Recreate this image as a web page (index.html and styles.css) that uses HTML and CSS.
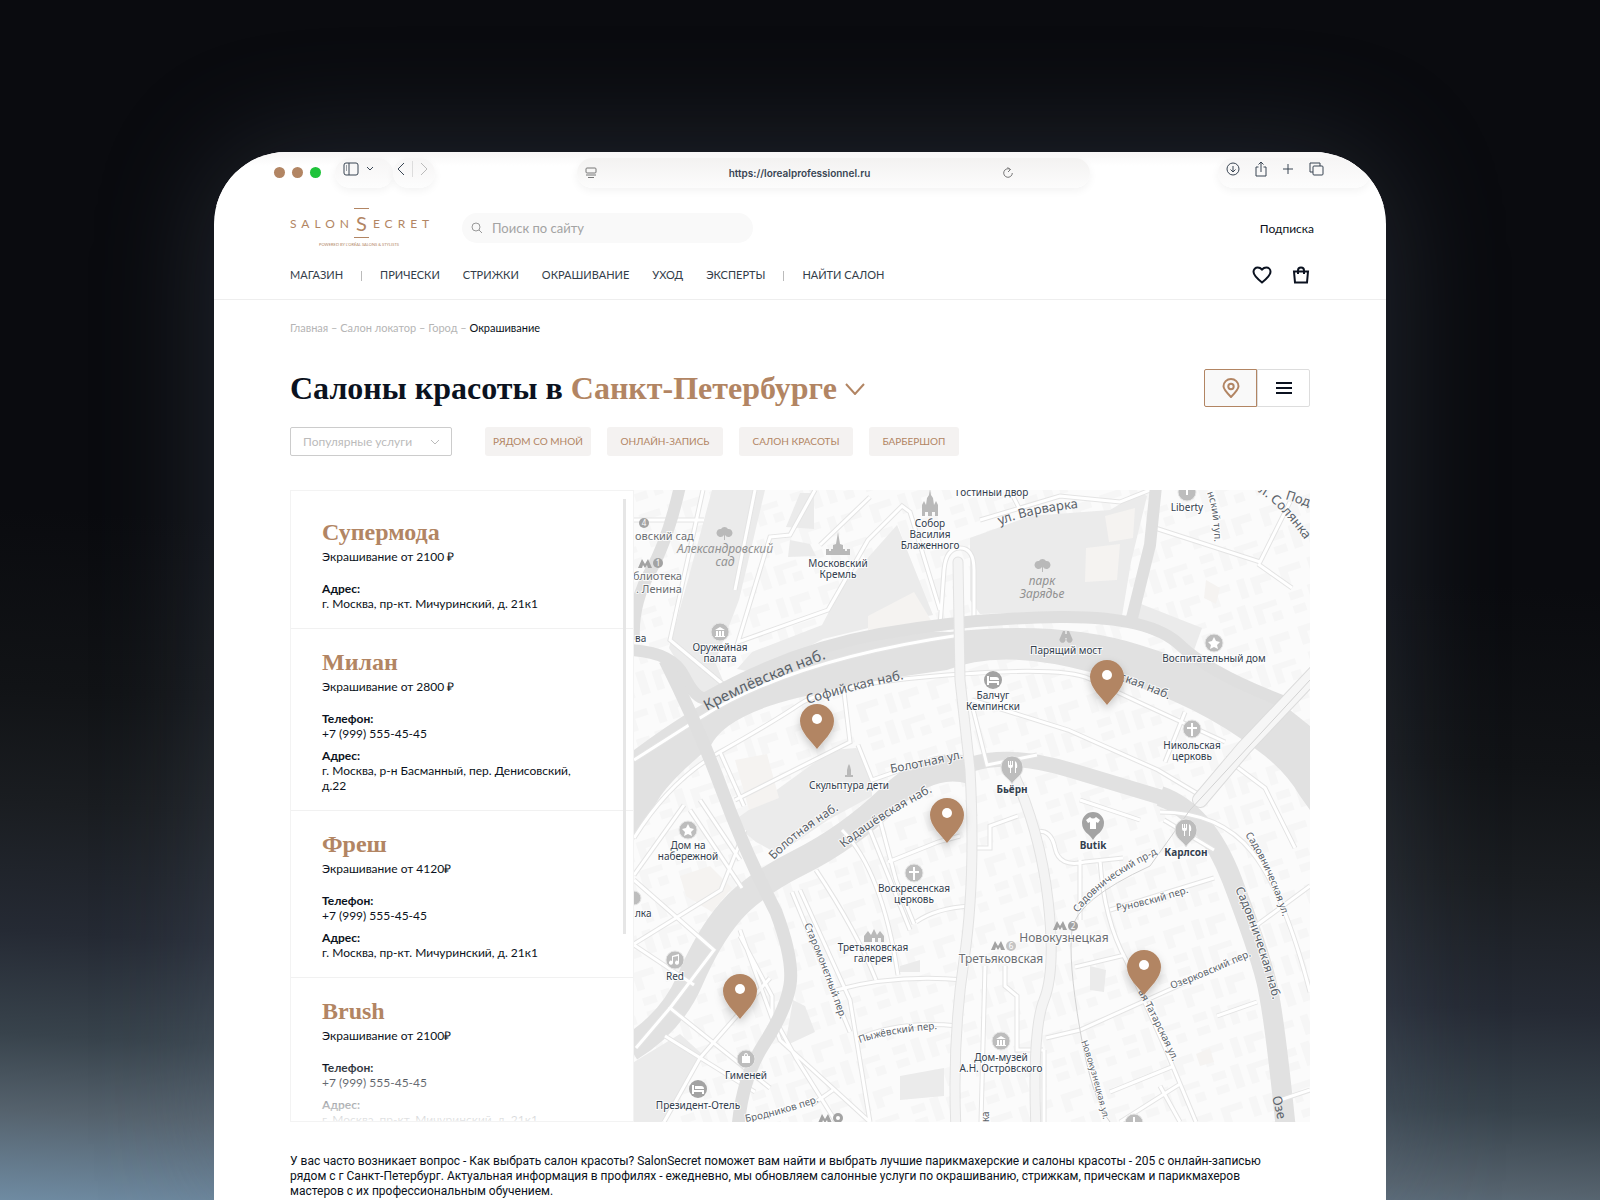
FILE: index.html
```
<!DOCTYPE html>
<html lang="ru">
<head>
    <meta charset="UTF-8">
    <title>Салоны красоты в Санкт-Петербурге</title>
    <meta name="viewport" content="width=device-width, initial-scale=1.0">
    <link rel="stylesheet" href="styles.css">
</head>
<body>
    <div class="window">
        <div class="browser-bar">
            <div class="dots"><span></span><span></span><span class="green"></span></div>
            <div class="bar-group sidebar-group">
                <button type="button" aria-label="Боковая панель">
                    <svg width="16" height="14" viewBox="0 0 16 14"><rect x="1" y="1" width="14" height="12" rx="2"/><path d="M6 1v12M3 4h1M3 6h1M3 8h1"/></svg>
                </button>
                <button type="button" aria-label="Вкладки">
                    <svg width="8" height="14" viewBox="0 0 8 14"><path d="M1 5l3 3 3-3"/></svg>
                </button>
            </div>
            <div class="bar-group history-group">
                <button type="button" aria-label="Назад">
                    <svg width="8" height="14" viewBox="0 0 8 14"><path d="M7 1L1 7l6 6"/></svg>
                </button>
                <i></i>
                <button type="button" class="muted" aria-label="Вперёд">
                    <svg width="8" height="14" viewBox="0 0 8 14"><path d="M1 1l6 6-6 6"/></svg>
                </button>
            </div>
            <div class="address">
                <svg width="12" height="12" viewBox="0 0 12 12"><rect x="1" y="1" width="10" height="5" rx="1"/><path d="M1 8h10M3 10.500h6"/></svg>
                <span>https://lorealprofessionnel.ru</span>
                <svg width="12" height="12" viewBox="0 0 12 12"><path d="M8.500 2.500A4.300 4.300 0 1 0 10.300 6M5.500 0.500l3 2-2.500 2.500"/></svg>
            </div>
            <div class="bar-group tools-group">
                <button type="button" aria-label="Загрузки">
                    <svg width="14" height="16" viewBox="0 0 14 16"><circle cx="7" cy="8" r="6"/><path d="M7 5v6M4.500 8.500L7 11l2.500-2.500"/></svg>
                </button>
                <button type="button" aria-label="Поделиться">
                    <svg width="14" height="16" viewBox="0 0 14 16"><path d="M4.500 6H2v9h10V6H9.500M7 11V1M4.500 3.500L7 1l2.500 2.500"/></svg>
                </button>
                <button type="button" aria-label="Новая вкладка">
                    <svg width="12" height="16" viewBox="0 0 12 16"><path d="M6 3v10M1 8h10"/></svg>
                </button>
                <button type="button" aria-label="Все вкладки">
                    <svg width="16" height="16" viewBox="0 0 16 16"><rect x="5" y="5" width="10" height="9" rx="1"/><path d="M5 11H2V2h10v3"/></svg>
                </button>
            </div>
        </div>

        <header>
            <div class="header-top">
                <a href="#" class="logo" aria-label="SalonSecret">
                    <span class="logo-name"><span>SALON</span><b>S</b><span>ECRET</span></span>
                    <small>POWERED BY L'ORÉAL SALONS &amp; STYLISTS</small>
                </a>
                <label class="search">
                    <svg width="12" height="12" viewBox="0 0 12 12"><circle cx="5" cy="5" r="4"/><path d="M8 8l3 3"/></svg>
                    <input type="search" placeholder="Поиск по сайту" aria-label="Поиск по сайту">
                </label>
                <a href="#" class="subscribe">Подписка</a>
            </div>
            <nav>
                <a href="#">МАГАЗИН</a>
                <i></i>
                <a href="#">ПРИЧЕСКИ</a>
                <a href="#">СТРИЖКИ</a>
                <a href="#">ОКРАШИВАНИЕ</a>
                <a href="#">УХОД</a>
                <a href="#">ЭКСПЕРТЫ</a>
                <i></i>
                <a href="#">НАЙТИ САЛОН</a>
                <div class="nav-icons">
                    <a href="#" aria-label="Избранное">
                        <svg width="20" height="18" viewBox="0 0 20 18"><path d="M10 16.500C5 12.500 1.500 9.500 1.500 5.800 1.500 3.200 3.400 1.500 5.700 1.500c1.800 0 3.400 1 4.300 2 .9-1 2.500-2 4.300-2 2.300 0 4.200 1.700 4.200 4.300 0 3.700-3.500 6.700-8.500 10.700z"/></svg>
                    </a>
                    <a href="#" aria-label="Корзина">
                        <svg width="18" height="18" viewBox="0 0 18 18"><path d="M2 5.500h14L15 16.500H3z"/><path d="M6 8V4.500a3 3 0 0 1 6 0V8"/></svg>
                    </a>
                </div>
            </nav>
        </header>

        <main>
            <div class="breadcrumbs">
                <a href="#">Главная</a> – <a href="#">Салон локатор</a> – <a href="#">Город</a> – <b>Окрашивание</b>
            </div>

            <div class="title-row">
                <h1>Салоны красоты в <button type="button">Санкт-Петербурге
                    <svg width="20" height="12" viewBox="0 0 20 12"><path d="M1 1l9 10 9-10"/></svg></button></h1>
                <div class="view-switch">
                    <button type="button" class="active" aria-label="Карта">
                        <svg width="18" height="20" viewBox="0 0 18 20"><path d="M9 19C4.500 14.500 1.500 11.500 1.500 8.300a7.500 7.300 0 0 1 15 0C16.500 11.500 13.500 14.500 9 19z"/><circle cx="9" cy="8.500" r="2.700"/></svg>
                    </button>
                    <button type="button" aria-label="Список">
                        <svg width="16" height="12" viewBox="0 0 16 12"><path d="M0 1h16M0 6h16M0 11h16"/></svg>
                    </button>
                </div>
            </div>

            <div class="filters">
                <div class="select-wrap">
                    <select aria-label="Популярные услуги">
                        <option>Популярные услуги</option>
                    </select>
                    <svg width="10" height="6" viewBox="0 0 10 6"><path d="M1 1l4 4 4-4"/></svg>
                </div>
                <button type="button" class="chip chip-near">РЯДОМ СО МНОЙ</button>
                <button type="button" class="chip chip-online">ОНЛАЙН-ЗАПИСЬ</button>
                <button type="button" class="chip chip-salon">САЛОН КРАСОТЫ</button>
                <button type="button" class="chip chip-barber">БАРБЕРШОП</button>
            </div>

            <section class="locator">
                <div class="salons">
                    <article>
                        <h2>Супермода</h2>
                        <p>Экрашивание от 2100 ₽</p>
                        <dl>
                            <dt>Адрес:</dt>
                            <dd>г. Москва, пр-кт. Мичуринский, д. 21к1</dd>
                        </dl>
                    </article>
                    <article>
                        <h2>Милан</h2>
                        <p>Экрашивание от 2800 ₽</p>
                        <dl>
                            <dt>Телефон:</dt>
                            <dd>+7 (999) 555-45-45</dd>
                            <dt>Адрес:</dt>
                            <dd>г. Москва, р-н Басманный, пер. Денисовский, д.22</dd>
                        </dl>
                    </article>
                    <article>
                        <h2>Фреш</h2>
                        <p>Экрашивание от 4120₽</p>
                        <dl>
                            <dt>Телефон:</dt>
                            <dd>+7 (999) 555-45-45</dd>
                            <dt>Адрес:</dt>
                            <dd>г. Москва, пр-кт. Мичуринский, д. 21к1</dd>
                        </dl>
                    </article>
                    <article>
                        <h2>Brush</h2>
                        <p>Экрашивание от 2100₽</p>
                        <dl>
                            <dt>Телефон:</dt>
                            <dd>+7 (999) 555-45-45</dd>
                            <dt>Адрес:</dt>
                            <dd>г. Москва, пр-кт. Мичуринский, д. 21к1</dd>
                        </dl>
                    </article>
                    <span class="scrollbar"></span>
                </div>

                <svg class="map" viewBox="634 490 676 632" preserveAspectRatio="xMidYMid slice" role="img" aria-label="Карта салонов">
                    <defs>
                        <pattern id="blocks" width="74" height="62" patternUnits="userSpaceOnUse" patternTransform="rotate(-18)">
                            <path d="M4 5h22v7H12v12H4zM34 4h8v20h-8zM48 6h20v8H56v10h-8zM6 32h14v8H6zM26 30h9v24h-9zM42 34h24v6H50v14h-8zM58 46h10v9H58zM6 46h13v8H6z" fill="#f6f6f6"/>
                        </pattern>
                        <path id="pin" d="M0 45C-6 37-17 28-17 17a17 17 0 0 1 34 0C17 28 6 37 0 45z"/>
                        <filter id="shadow" x="-50%" y="-50%" width="200%" height="200%"><feDropShadow dx="0" dy="4" stdDeviation="4" flood-color="#000" flood-opacity=".2"/></filter>
                        <g id="minor">
                            <path d="M703 490L670 640L730 690M755 490l-20 100M815 490l-25 45-20 2-32 105 90-32 40-70 34-34 8 6 30 98M820 545l50-48M634 520l70 0"/>
                            <path d="M940 626l4-56q2-22 16-22t14 22v46M634 760L700 718Q790 660 960 635M634 838Q670 780 720 752T800 704T947 675T1090 679T1225 742M720 752l24 54"/>
                            <path d="M735 800L850 742l-6-50M858 745l14 35 40-14M745 830l-24 60-87 54M634 875l50-70M700 800l40 60M690 810l52 78"/>
                            <path d="M634 880l80 70-44 58 100 80M634 945l60 40M740 936l32 60 0 18 24 44 40 64M740 930l40 110 90 82M800 890l50 110 20 122M792 892L850 1032M816 870q40 60 60 110M842 830q40 40 56 145M870 830l40 100"/>
                            <path d="M670 1008l-34 40M700 1058l-36 64M665 1036l90 56M700 1058l70-80M813 1104l20-14M836 990q60-16 128-10M856 1040q40-20 102-14M888 862l50-20 22-6M916 922q20-14 54-16M880 820l16 60 18 44"/>
                            <path d="M972 705l15 60 50-10M972 700l96 30 90 40 50 30M1185 712l-20 50M1155 528l105 34 30-60M1258 564l34 24M980 520l80-24 60 6 30-12M1010 490l10 20"/>
                            <path d="M972 848l18 0v-22l28-10M1035 832q16-4 20 16t30 14l38-4M1080 860v60M1100 860q4 60 26 100l40 90 30 72M1110 910l104-32M1075 967l50-12M1080 800l60 20M1046 1038l34-8 160-72M1044 1050l0 72M1005 966v20l12 10v54h26M985 966l-4 156M1110 1092l64-26M1120 1122l60-38M1160 1086l20 36M1217 1016l40-14M1250 930l60-44M1160 812q60 0 92 40t58 140M1214 850l-50-30M1280 1100l30-10M1225 758l40 30 30 60"/>
                        </g>
                        <path id="kreml" d="M707 711Q760 682 850 650"/>
                        <path id="sofia" d="M808 704Q850 690 914 677"/>
                        <path id="sofia2" d="M1112 678Q1140 686 1190 709"/>
                        <path id="bolul" d="M891 773Q930 766 980 754"/>
                        <path id="kadash" d="M844 848Q880 818 942 787"/>
                        <path id="bolnab" d="M774 860Q800 832 852 802"/>
                        <path id="star" d="M804 925Q822 965 844 1030"/>
                        <path id="pyzh" d="M860 1043Q890 1032 950 1028"/>
                        <path id="brod" d="M746 1122Q780 1116 830 1098"/>
                        <path id="sadpr" d="M1078 913Q1100 880 1170 848"/>
                        <path id="run" d="M1117 911Q1150 906 1202 888"/>
                        <path id="ozer" d="M1172 989Q1205 977 1262 951"/>
                        <path id="sadul" d="M1245 835Q1268 866 1287 930"/>
                        <path id="sadnab" d="M1235 889Q1257 935 1278 1020"/>
                        <path id="tatar" d="M1138 992Q1152 1016 1186 1090"/>
                        <path id="novok" d="M1081 1042Q1094 1076 1108 1140"/>
                        <path id="varv" d="M1000 525Q1035 511 1100 506"/>
                        <path id="sol" d="M1258 492Q1282 505 1316 556"/>
                        <path id="tup" d="M1207 493Q1216 515 1214 560"/>
                    </defs>

                    <rect x="634" y="490" width="676" height="632" fill="#fbfbfb"/>
                    <rect x="634" y="490" width="676" height="632" fill="url(#blocks)"/>

                    <!-- parks -->
                    <g fill="#ebebeb">
                        <path d="M712 490h53l-26 110-24 62 12 28-28 8-30-50 20-72z"/>
                        <path d="M800 493h14v36l-28-2zM790 540l20 4 6 12-28 1z"/>
                        <path d="M752 652l70-27 20-38 55-62 36 90-60 12-50 12-66 34-20-4z"/>
                        <path d="M970 538l60-22 80-6 30-18 7 4-16 66-10 60-76-10-65 2-10-14z"/>
                        <path d="M1136 602l66 26-8 22-60-22z"/>
                        <path d="M732 822l100-72 24-2 16 26 0 22-44 24-50 34-22-12z"/>
                        <path d="M793 1000l12 6 10 26-30 14zM900 966l20-6v12h-20zM634 1062l46-28 22 20-40 68h-28zM1090 966l16 4-2 22-14-2zM900 1076l44-8v28l-44 4z"/>
                    </g>
                    <g fill="#f5f3f1">
                        <path d="M868 616l46-24 18 30-64 8zM1086 548l34-4-3 36-32 2zM1105 516l30-8-2 30-24 4zM735 760l32-6 12 44-30 12zM680 876l30-10 22 22-20 24-26-16z"/>
                        <path d="M1196 1054l14-6 4 14-14 4zM1206 580l14 8-4 16-12-6z"/>
                    </g>

                    <!-- water -->
                    <path d="M634 750Q700 700 780 664T950 632Q1060 620 1140 645T1280 702L1310 726V810L1300 796Q1285 770 1257 750L1243 740Q1180 696 1090 672T947 670Q870 680 797 698T710 747Q670 780 658 800L634 840z" fill="#e1e1e1"/>
                    <g fill="none" stroke="#e1e1e1">
                        <path d="M630 1048Q672 1022 690 980T730 912T800 862T890 798T972 771" stroke-width="27"/>
                        <path d="M972 764Q1010 752 1070 770T1170 800" stroke-width="15"/>
                        <path d="M1160 796Q1206 812 1232 880T1266 980T1286 1130" stroke-width="20"/>
                    </g>

                    <use href="#minor" class="streets-edge"/>
                    <use href="#minor" class="streets"/>

                    <!-- main roads -->
                    <g fill="none" stroke="#dfdfdf">
                        <path d="M680 486Q668 540 650 572T634 640M630 650Q672 652 684 676T706 698Q790 650 880 634T1060 617T1180 645T1290 704M1156 486L1150 545L1130 626" stroke-width="12"/>
                        <path d="M665 660Q700 730 722 790T776 912Q794 960 790 985T764 1044T738 1128" stroke-width="13"/>
                    </g>
                    <g fill="none" stroke-linecap="round">
                        <path d="M958 562L960 680L970 770Q976 880 964 960T956 1130M1012 770Q1040 830 1048 900T1044 1000T1036 1130" stroke="#e2e2e2" stroke-width="11"/>
                        <path d="M958 562L960 680L970 770Q976 880 964 960T956 1130M1012 770Q1040 830 1048 900T1044 1000T1036 1130" stroke="#f4f4f4" stroke-width="9"/>
                        <path d="M1318 670L1244 748L1200 800" stroke="#dcdcdc" stroke-width="16"/>
                        <path d="M1318 670L1244 748L1200 800" stroke="#f6f6f6" stroke-width="14"/>
                        <path d="M1310 680L1190 810L1150 866Q1076 900 1072 930T1080 1030T1110 1122" stroke="#d2d2d2" stroke-width="1"/>
                    </g>

                    <!-- street names -->
                    <g class="street">
                        <text class="s15"><textPath href="#kreml">Кремлёвская наб.</textPath></text>
                        <text class="s13"><textPath href="#sofia">Софийская наб.</textPath></text>
                        <text class="s12"><textPath href="#sofia2">йская наб.</textPath></text>
                        <text class="s12"><textPath href="#bolul">Болотная ул.</textPath></text>
                        <text class="s12"><textPath href="#kadash">Кадашёвская наб.</textPath></text>
                        <text class="s12"><textPath href="#bolnab">Болотная наб.</textPath></text>
                        <text class="s13"><textPath href="#varv">ул. Варварка</textPath></text>
                        <text class="s13"><textPath href="#sol">л. Солянка</textPath></text>
                        <text class="s12"><textPath href="#sadnab">Садовническая наб.</textPath></text>
                        <text><textPath href="#star">Старомонетный пер.</textPath></text>
                        <text><textPath href="#pyzh">Пыжёвский пер.</textPath></text>
                        <text><textPath href="#brod">Бродников пер.</textPath></text>
                        <text><textPath href="#sadpr">Садовнический пр-д</textPath></text>
                        <text><textPath href="#run">Руновский пер.</textPath></text>
                        <text><textPath href="#ozer">Озерковский пер.</textPath></text>
                        <text><textPath href="#sadul">Садовническая ул.</textPath></text>
                        <text><textPath href="#tatar">ая Татарская ул.</textPath></text>
                        <text class="s9"><textPath href="#novok">Новокузнецкая ул.</textPath></text>
                        <text><textPath href="#tup">нский туп.</textPath></text>
                        <text class="s13" transform="translate(1285 499) rotate(18)">Под</text>
                        <text class="s13" transform="translate(1272 1097) rotate(76)">Озе</text>
                        <text transform="translate(989 1122) rotate(-90)">ка</text>
                    </g>

                    <!-- parks and metro labels -->
                    <g class="park">
                        <text x="725" y="553">Александровский</text>
                        <text x="725" y="566">сад</text>
                        <text x="1042" y="585">парк</text>
                        <text x="1042" y="598">Зарядье</text>
                    </g>
                    <g class="metro">
                        <text x="635" y="540" class="s11 start">овский сад</text>
                        <text x="682" y="580" class="s11 end">блиотека</text>
                        <text x="682" y="593" class="s11 end">. Ленина</text>
                        <text x="1064" y="942">Новокузнецкая</text>
                        <text x="1001" y="963">Третьяковская</text>
                    </g>
                    <g fill="#a3a3a3">
                        <path d="M638 568l4-9 3 5 3-5 4 9h-4l-1-3-2 3-2-3-1 3zM1053 930l4-9 3 5 3-5 4 9h-4l-1-3-2 3-2-3-1 3zM991 950l4-9 3 5 3-5 4 9h-4l-1-3-2 3-2-3-1 3zM818 1123l4-9 3 5 3-5 4 9h-4l-1-3-2 3-2-3-1 3z"/>
                        <circle cx="658" cy="563" r="5"/><circle cx="644" cy="523" r="5"/><circle cx="1073" cy="926" r="5"/><circle cx="838" cy="1118" r="5"/>
                    </g>
                    <circle cx="1011" cy="946" r="5" fill="#c4c4c4"/>
                    <circle cx="838" cy="1118" r="2" fill="#fff"/>
                    <g class="line-number">
                        <text x="658" y="566">1</text>
                        <text x="644" y="526">4</text>
                        <text x="1073" y="929">2</text>
                        <text x="1011" y="949">6</text>
                    </g>

                    <!-- places -->
                    <g class="poi">
                        <text x="838" y="567">Московский</text><text x="838" y="578">Кремль</text>
                        <text x="930" y="527">Собор</text><text x="930" y="538">Василия</text><text x="930" y="549">Блаженного</text>
                        <text x="720" y="651">Оружейная</text><text x="720" y="662">палата</text>
                        <text x="849" y="789">Скульптура дети</text>
                        <text x="993" y="699">Балчуг</text><text x="993" y="710">Кемпински</text>
                        <text x="1066" y="654">Парящий мост</text>
                        <text x="1214" y="662">Воспитательный дом</text>
                        <text x="1192" y="749">Никольская</text><text x="1192" y="760">церковь</text>
                        <text x="688" y="849">Дом на</text><text x="688" y="860">набережной</text>
                        <text x="914" y="892">Воскресенская</text><text x="914" y="903">церковь</text>
                        <text x="873" y="951">Третьяковская</text><text x="873" y="962">галерея</text>
                        <text x="675" y="980">Red</text>
                        <text x="746" y="1079">Гименей</text>
                        <text x="698" y="1109">Президент-Отель</text>
                        <text x="1001" y="1061">Дом-музей</text><text x="1001" y="1072">А.Н. Островского</text>
                        <text x="992" y="496">Гостиный двор</text>
                        <text x="1187" y="511">Liberty</text>
                        <text x="635" y="642" class="start">ва</text>
                        <text x="635" y="917" class="start">лка</text>
                        <g font-weight="bold">
                            <text x="1012" y="793">Бьёрн</text>
                            <text x="1093" y="849">Butik</text>
                            <text x="1186" y="856">Карлсон</text>
                        </g>
                    </g>

                    <g class="badges">
                        <circle cx="720" cy="632" r="9"/><circle cx="1214" cy="643" r="9"/><circle cx="1192" cy="729" r="9"/><circle cx="688" cy="830" r="9"/><circle cx="914" cy="873" r="9"/><circle cx="675" cy="960" r="9"/><circle cx="746" cy="1059" r="9"/><circle cx="1001" cy="1041" r="9"/><circle cx="1187" cy="492" r="9"/><circle cx="634" cy="898" r="7"/><circle cx="1134" cy="1123" r="9"/>
                        <path d="M1012 784c-3-6-11-8-11-17a11 11 0 0 1 22 0c0 9-8 11-11 17zM1186 847c-3-6-11-8-11-17a11 11 0 0 1 22 0c0 9-8 11-11 17z"/>
                    </g>
                    <g class="badges-dark">
                        <circle cx="993" cy="680" r="9"/><circle cx="698" cy="1089" r="9"/>
                        <path d="M1093 840c-3-6-11-8-11-17a11 11 0 0 1 22 0c0 9-8 11-11 17z"/>
                    </g>
                    <g fill="#fff">
                        <path id="star5" d="M1214 637l2 4 4 1-3 3 1 4-4-2-4 2 1-4-3-3 4-1z"/>
                        <use href="#star5" x="-526" y="187"/>
                        <path id="museum" d="M715 630l5-3 5 3zM716 631h2v5h-2zM719 631h2v5h-2zM722 631h2v5h-2zM715 636h10v1h-10z"/>
                        <use href="#museum" x="281" y="409"/>
                        <path d="M1191 723h2v4h4v2h-4v7h-2v-7h-4v-2h4zM913 867h2v4h4v2h-4v7h-2v-7h-4v-2h4z"/>
                        <path id="bed" d="M987 676h2v5h10v4h-2v-2h-8v2h-2zM990 677h6q3 0 3 3h-9z"/>
                        <use href="#bed" x="-295" y="409"/>
                        <path d="M672 956l7-2v9a2 2 0 1 1-1-2v-5l-5 1v6a2 2 0 1 1-1-2zM742 1056h8v7h-8zM744 1056q0-3 2-3t2 3h-1q0-2-1-2t-1 2z"/>
                        <path id="fork" d="M1008 761v5q0 2 2 2v5h1v-5q2 0 2-2v-5h-1v4h-1v-4h-1v4h-1v-4zM1015 773v-12q3 2 2 7h-1v5z"/>
                        <use href="#fork" x="174" y="63"/>
                        <path d="M1090 817q3 3 6 0l4 3-2 3-2-1v7h-6v-7l-2 1-2-3zM1186 486h2v9h-2zM1133 1117h2v8h-2z"/>
                    </g>
                    <!-- landmarks -->
                    <g fill="#b9b9b9">
                        <path d="M724 540v-5a4 4 0 1 1-3-6 4 4 0 0 1 7 0 4 4 0 1 1-3 6v5zM1042 572v-5a4 4 0 1 1-3-6 4 4 0 0 1 7 0 4 4 0 1 1-3 6v5z"/>
                        <path d="M826 555v-6h3v2h2v-2h2v-4l3-1 2-12 2 12 3 1v4h2v2h2v-2h3v6zM922 516v-11l2-4 2 4 1-7 2-3 1-6 1 6 2 3 1 7 2-4 2 4v11h-3v-4h-3v4h-4v-4h-3v4zM864 942v-6l4-5 3 4 3-6 3 6 3-4 4 5v6h-3v-4h-3v4h-3v-4h-3v4z"/>
                        <path d="M845 777v-2h2v-5l1-4 1-2 1 2 1 4v5h2v2zM1060 638l3-7h2v3h2v-3h2l3 7a3 3 0 1 1-5 0h-2a3 3 0 1 1-5 0z"/>
                    </g>

                    <!-- salon pins -->
                    <g class="pins">
                        <g transform="translate(817 704)"><use href="#pin"/><circle cy="15" r="5"/></g>
                        <g transform="translate(1107 660)"><use href="#pin"/><circle cy="15" r="5"/></g>
                        <g transform="translate(947 798)"><use href="#pin"/><circle cy="15" r="5"/></g>
                        <g transform="translate(740 974)"><use href="#pin"/><circle cy="15" r="5"/></g>
                        <g transform="translate(1144 950)"><use href="#pin"/><circle cy="15" r="5"/></g>
                    </g>
                </svg>
            </section>

            <p class="about">У вас часто возникает вопрос - Как выбрать салон красоты? SalonSecret поможет вам найти и выбрать лучшие парикмахерские и салоны красоты - 205 с онлайн-записью<br>рядом с г Санкт-Петербург. Актуальная информация в профилях - ежедневно, мы обновляем салонные услуги по окрашиванию, стрижкам, прическам и парикмахеров<br>мастеров с их профессиональным обучением.</p>
        </main>
    </div>
</body>
</html>
```
FILE: styles.css
```
* {
    box-sizing: border-box;
}
body {
    margin: 0;
    height: 100vh;
    overflow: hidden;
    padding: 152px 214px 0;
    font-family: Lato, "Open Sans", sans-serif;
    font-size: 12px;
    line-height: 15px;
    color: #0b1220;
    background: linear-gradient(183deg, #0a0b0f 0%, #0a0b0f 46%, #111316 60%, #1a1d21 69%, #252a34 79%, #38434c 87%, #55626d 93%, #6f8ba2 100%);
}
a {
    color: inherit;
    text-decoration: none;
}
button {
    padding: 0;
    border: none;
    background: none;
    font: inherit;
    color: inherit;
    cursor: pointer;
}
svg {
    display: block;
    fill: none;
    stroke: currentColor;
}
.window {
    background: #fff;
    border-radius: 72px 72px 0 0;
    min-height: 100%;
    overflow: hidden;
    box-shadow: 0 0 120px rgba(110, 125, 145, 0.26);
}

/* browser bar */
.browser-bar {
    display: flex;
    align-items: flex-start;
    height: 54px;
    padding: 6px 16px 0 60px;
    background: linear-gradient(#f7f6f6, #fff 14px);
    color: #394553;
}
.dots {
    display: flex;
    gap: 7px;
    padding-top: 9px;
    margin-right: 14px;
}
.dots span {
    width: 11px;
    height: 11px;
    border-radius: 50%;
    background: #b28563;
}
.dots .green {
    background: #1fc33b;
}
.bar-group {
    display: flex;
    gap: 7px;
    height: 30px;
    padding: 3px 8px;
    border-radius: 15px;
    background: linear-gradient(#f6f5f5, #fdfdfd);
    box-shadow: 0 3px 8px rgba(0, 0, 0, 0.05);
}
.bar-group button {
    height: 16px;
}
.bar-group i {
    width: 1px;
    height: 16px;
    background: #ddd;
}
.sidebar-group {
    width: 58px;
    padding-right: 0;
}
.history-group {
    width: 42px;
    padding: 3px 4px;
}
.bar-group .muted {
    color: #bbb;
}
.address {
    display: flex;
    align-items: center;
    justify-content: space-between;
    flex: 1;
    max-width: 513px;
    height: 30px;
    margin-left: 142px;
    margin-right: auto;
    padding: 0 76px 0 8px;
    border-radius: 15px;
    background: linear-gradient(#f3f2f1, #fcfcfc);
    box-shadow: 0 3px 8px rgba(0, 0, 0, 0.05);
    font-family: Inter, sans-serif;
    font-size: 10px;
    font-weight: 600;
}
.address svg {
    color: #777;
}
.tools-group {
    gap: 14px;
    width: 152px;
}

/* header */
header {
    padding: 0 76px;
    border-bottom: 1px solid #eee;
}
.header-top {
    display: flex;
    align-items: center;
    height: 44px;
}
.logo {
    display: flex;
    flex-direction: column;
    align-items: center;
    width: 138px;
    margin-right: 34px;
    color: #b28563;
}
.logo-name {
    display: flex;
    align-items: center;
    justify-content: space-between;
    width: 100%;
    font-size: 12px;
    letter-spacing: 5px;
}
.logo-name b {
    padding: 5px 2px;
    margin-right: 4px;
    border-top: 1px solid;
    border-bottom: 1px solid;
    font-size: 20px;
    font-weight: 400;
    line-height: 18px;
    letter-spacing: 0;
}
.logo-name span:last-child {
    margin-right: -5px;
}
.logo small {
    font-size: 4px;
    line-height: 6px;
    margin-top: 4px;
}
.search {
    display: flex;
    align-items: center;
    gap: 7px;
    width: 291px;
    height: 30px;
    padding: 0 9px;
    border-radius: 15px;
    background: #f9f9f9;
    color: #999;
}
.search input {
    flex: 1;
    min-width: 0;
    border: none;
    outline: none;
    background: none;
    font: inherit;
    font-size: 13px;
}
.search input::placeholder {
    color: #a3a3a3;
}
.subscribe {
    margin-left: auto;
    margin-right: -4px;
}
nav {
    display: flex;
    align-items: center;
    gap: 23px;
    height: 49px;
    font-size: 11px;
    color: #333d49;
}
nav i {
    width: 1px;
    height: 10px;
    margin: 3px -5px 0;
    background: #bbb;
}
.nav-icons {
    display: flex;
    gap: 20px;
    margin-left: auto;
    color: #0b1220;
}
.nav-icons svg {
    stroke-width: 2;
}

/* content */
main {
    padding: 20px 76px 0;
}
.breadcrumbs {
    font-size: 11px;
    color: #b5b5b5;
}
.breadcrumbs b {
    font-weight: 400;
    color: #0b1220;
}
.title-row {
    display: flex;
    align-items: center;
    justify-content: space-between;
    margin-top: 33px;
}
h1,
h2 {
    margin: 0;
    font-family: "Liberation Serif", serif;
    font-weight: bold;
}
h1 {
    font-size: 32px;
    line-height: 40px;
}
h1 button,
h2 {
    color: #b28563;
}
h1 svg {
    display: inline-block;
    margin-bottom: 4px;
    stroke-width: 2;
}
.view-switch {
    display: flex;
}
.view-switch button {
    display: flex;
    align-items: center;
    justify-content: center;
    width: 53px;
    height: 38px;
    border: 1px solid #ddd;
    border-radius: 0 2px 2px 0;
}
.view-switch svg {
    stroke-width: 2;
}
.view-switch .active {
    border-color: #b28563;
    border-radius: 2px 0 0 2px;
    background: #f9f9f9;
    color: #b28563;
}
.filters {
    display: flex;
    gap: 16px;
    margin-top: 19px;
}
.select-wrap {
    position: relative;
    width: 162px;
    margin-right: 17px;
    color: #bbb;
}
.select-wrap select {
    appearance: none;
    width: 100%;
    height: 29px;
    padding: 0 12px;
    border: 1px solid #ccc;
    border-radius: 2px;
    background: #fff;
    font: inherit;
    color: inherit;
}
.select-wrap svg {
    position: absolute;
    right: 12px;
    top: 12px;
}
.chip {
    height: 29px;
    border-radius: 3px;
    background: #f4f2f1;
    font-size: 10px;
    color: #b28563;
}
.chip-near {
    width: 106px;
}
.chip-online {
    width: 116px;
}
.chip-salon {
    width: 114px;
}
.chip-barber {
    width: 90px;
}

/* list and map */
.locator {
    display: flex;
    height: 632px;
    margin-top: 34px;
}
.salons {
    position: relative;
    flex: 0 0 344px;
    padding-top: 8px;
    border: 1px solid #f3f3f3;
    overflow: hidden;
}
.salons::after {
    content: "";
    position: absolute;
    left: 0;
    right: 0;
    bottom: 0;
    height: 56px;
    background: linear-gradient(rgba(255, 255, 255, 0.1), rgba(255, 255, 255, 0.9));
}
article {
    padding: 18px 48px 17px 31px;
    border-bottom: 1px solid #f1f1f1;
}
h2 {
    font-size: 24px;
    line-height: 30px;
}
article p {
    margin: 2px 0 17px;
}
dl,
dd {
    margin: 0;
}
dt {
    font-weight: bold;
}
dd + dt {
    margin-top: 7px;
}
.scrollbar {
    position: absolute;
    top: 8px;
    right: 7px;
    width: 3px;
    height: 435px;
    background: #e6e6e6;
}
.map {
    flex: 1;
    min-width: 0;
    height: 100%;
    font-family: "Noto Sans", sans-serif;
    stroke: none;
}
.streets-edge,
.streets {
    fill: none;
    stroke: #e4e4e4;
    stroke-width: 5;
}
.streets {
    stroke: #fff;
    stroke-width: 3;
}
.street,
.park,
.metro,
.poi {
    font-size: 10px;
    fill: #5a626a;
    stroke: #fff;
    stroke-width: 2px;
    stroke-opacity: 0.8;
    paint-order: stroke;
}
.map .s9 {
    font-size: 9px;
}
.map .s11 {
    font-size: 11px;
}
.map .s12 {
    font-size: 12px;
}
.map .s13 {
    font-size: 13px;
}
.map .s15 {
    font-size: 15px;
}
.street .s15,
.street .s13 {
    stroke: none;
}
.park,
.metro,
.poi,
.line-number {
    text-anchor: middle;
}
.map .start {
    text-anchor: start;
}
.map .end {
    text-anchor: end;
}
.park {
    font-size: 12px;
    font-style: italic;
    fill: #929292;
    stroke: none;
}
.metro {
    font-size: 12px;
    fill: #6c6f73;
}
.poi {
    fill: #33404e;
}
.line-number {
    font-size: 8px;
    fill: #fff;
}
.badges {
    fill: #bdbdbd;
    stroke: #e6e6e6;
}
.badges-dark {
    fill: #a3a3a3;
}
.pins {
    fill: #b28563;
    filter: url(#shadow);
}
.pins circle {
    fill: #fff;
}
.about {
    margin: 32px 0 0;
    font-family: Roboto, sans-serif;
    white-space: nowrap;
}
```
